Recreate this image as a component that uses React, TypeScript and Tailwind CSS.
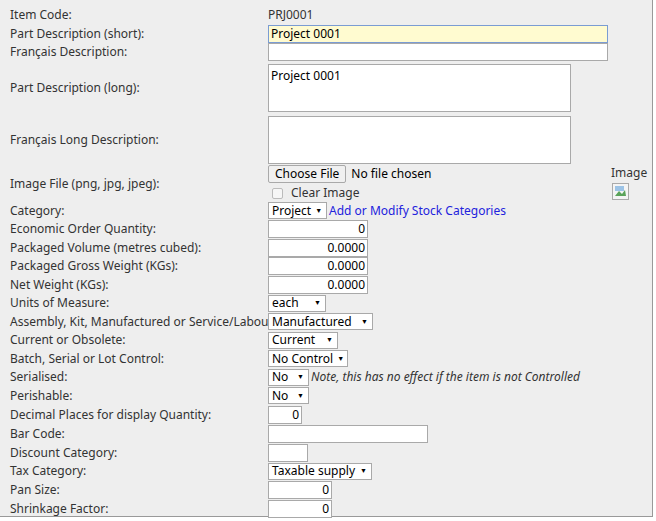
import React from 'react';

const Sel = ({ label, w }: { label: string; w: string }) => (
  <span className={`inline-flex items-center justify-between whitespace-nowrap h-[17px] border border-[#a9a9a9] bg-white pl-[3px] pr-[4px] text-[12px] text-black ${w}`}>
    <span>{label}</span>
    <span className="text-[7px] ml-1">▼</span>
  </span>
);

const Num = ({ v, w = 'w-[100px]' }: { v: string; w?: string }) => (
  <span className={`inline-flex items-center justify-end h-[18px] border border-[#a9a9a9] bg-white pr-[2px] text-[12px] text-black ${w}`}>{v}</span>
);

const Row = ({ label, h = 'h-[18.5px]', children }: { label: string; h?: string; children?: React.ReactNode }) => (
  <div className={`flex items-center whitespace-nowrap ${h}`}>
    <div className="w-[268px] shrink-0 pl-[10px]">{label}</div>
    <div className="flex items-center gap-[2px]">{children}</div>
  </div>
);

export default function App() {
  return (
    <div className="w-[656px] h-[521px] bg-white font-['Liberation_Sans'] text-[12px] text-[#333]">
      <div className="w-[653px] h-[517px] bg-[#eeeeee] border-r border-b border-[#999] pt-[6px]">
        <Row label="Item Code:"><span>PRJ0001</span></Row>
        <Row label="Part Description (short):">
          <span className="inline-flex items-center h-[18px] w-[340px] border border-[#7a9cd3] bg-[#fffbd0] pl-[2px] text-black">Project 0001</span>
        </Row>
        <Row label="Français Description:">
          <span className="inline-block h-[18px] w-[340px] border border-[#a9a9a9] bg-white" />
        </Row>
        <Row label="Part Description (long):" h="h-[52px]">
          <span className="block h-[48px] w-[303px] border border-[#a9a9a9] bg-white px-[2px] pt-[2px] font-['Liberation_Mono'] text-[12px] text-black">Project 0001</span>
        </Row>
        <Row label="Français Long Description:" h="h-[52px]">
          <span className="block h-[48px] w-[303px] border border-[#a9a9a9] bg-white" />
        </Row>
        <div className="flex items-center h-[36px] whitespace-nowrap">
          <div className="w-[268px] shrink-0 pl-[10px]">Image File (png, jpg, jpeg):</div>
          <div className="flex flex-col w-[343px]">
            <div className="flex items-center gap-[5px]">
              <span className="inline-flex items-center h-[18px] px-[6px] border border-[#a9a9a9] rounded-[2px] bg-[#f0f0f0] text-black">Choose File</span>
              <span className="text-black">No file chosen</span>
            </div>
            <div className="flex items-center gap-[8px] pl-[4px] mt-[1px]">
              <span className="inline-block w-[11px] h-[11px] border border-[#bbb] rounded-[2px] bg-[#f6f6f6]" />
              <span>Clear Image</span>
            </div>
          </div>
          <div className="self-start -mt-[2px] flex flex-col items-start">
            <span>Image</span>
            <svg width="17" height="17" viewBox="0 0 17 17" className="mt-[1px] ml-[1px]">
              <rect x="0.5" y="0.5" width="16" height="16" fill="#f4f4f4" stroke="#aaa" />
              <path d="M3 13 L7 8 L10 11 L13 7 L14 13 Z" fill="#5aa35a" />
              <rect x="3" y="3" width="9" height="5" fill="#9cc3e6" />
            </svg>
          </div>
        </div>
        <Row label="Category:"><Sel label="Project" w="w-[59px]" /><span className="text-[#2222dd]">Add or Modify Stock Categories</span></Row>
        <Row label="Economic Order Quantity:"><Num v="0" /></Row>
        <Row label="Packaged Volume (metres cubed):"><Num v="0.0000" /></Row>
        <Row label="Packaged Gross Weight (KGs):"><Num v="0.0000" /></Row>
        <Row label="Net Weight (KGs):"><Num v="0.0000" /></Row>
        <Row label="Units of Measure:"><Sel label="each" w="w-[58px]" /></Row>
        <Row label="Assembly, Kit, Manufactured or Service/Labour:"><Sel label="Manufactured" w="w-[105px]" /></Row>
        <Row label="Current or Obsolete:"><Sel label="Current" w="w-[70px]" /></Row>
        <Row label="Batch, Serial or Lot Control:"><Sel label="No Control" w="w-[80px]" /></Row>
        <Row label="Serialised:"><Sel label="No" w="w-[41px]" /><span className="italic">Note, this has no effect if the item is not Controlled</span></Row>
        <Row label="Perishable:"><Sel label="No" w="w-[41px]" /></Row>
        <Row label="Decimal Places for display Quantity:" h="h-[19px]"><Num v="0" w="w-[34px]" /></Row>
        <Row label="Bar Code:" h="h-[19px]"><Num v="" w="w-[160px]" /></Row>
        <Row label="Discount Category:" h="h-[19px]"><Num v="" w="w-[40px]" /></Row>
        <Row label="Tax Category:" h="h-[18.5px]"><Sel label="Taxable supply" w="w-[104px]" /></Row>
        <Row label="Pan Size:" h="h-[19px]"><Num v="0" w="w-[64px]" /></Row>
        <Row label="Shrinkage Factor:" h="h-[19px]"><Num v="0" w="w-[64px]" /></Row>
      </div>
    </div>
  );
}
